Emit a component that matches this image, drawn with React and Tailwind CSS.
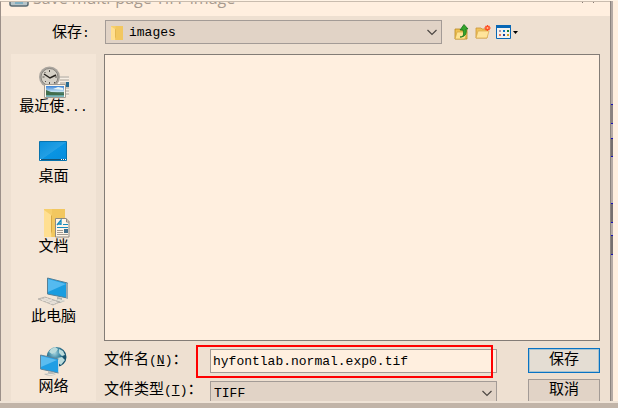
import React from "react";

const FONT = "font-['Liberation_Mono','Noto_Sans_CJK_SC',monospace]";

function Chevron() {
  return (
    <svg className="pointer-events-none absolute right-1 top-2 h-2 w-3" viewBox="0 0 12 8" fill="none" stroke="#4c4743" strokeWidth="1.2">
      <path d="M1.500 2 6 6.500l4.500-4.500" />
    </svg>
  );
}

function FolderShape() {
  return (
    <>
      <path d="M0 0h21v28H0z" fill="#f6cf6c" />
      <path d="M8 0h13v28H8z" fill="#f2c75f" />
      <path d="M0 1l7 5v22H0z" fill="#ffdf91" />
      <path d="M7 6l1 1v15l-1 3z" fill="#d9a944" />
    </>
  );
}

function SmallFolder() {
  return (
    <svg className="pointer-events-none absolute left-1.5 top-1.5 h-3.5 w-3" viewBox="0 0 21 28" preserveAspectRatio="none">
      <FolderShape />
    </svg>
  );
}

function RecentIcon() {
  return (
    <svg className="h-8 w-8" viewBox="0 0 32 32">
      <defs>
        <linearGradient id="photo" x2="0" y2="1">
          <stop offset="0" stopColor="#3b83d6" />
          <stop offset=".55" stopColor="#cfe9f3" />
          <stop offset=".6" stopColor="#3f6d55" />
          <stop offset="1" stopColor="#7fc0c9" />
        </linearGradient>
      </defs>
      <path d="M20 10h11v20H20z" fill="#f7efe4" />
      <path d="M20 11h11M22 14h9M22 17h9M28 22h3M28 25h3M28 28h3" stroke="#aaa299" />
      <path d="M28 16h3v5h-3z" fill="#286b91" />
      <circle cx="11.500" cy="11" r="10.500" fill="#aaa59e" />
      <circle cx="11.500" cy="11" r="8.500" fill="#d5d0c6" stroke="#89857f" />
      <path d="M11.500 4v2M11.500 16v2M4.500 11h2M17 11h2M6.500 6l1 1M16 16l1 1M7 16l1-1" stroke="#55514c" />
      <path d="M6 8l6 4 6-3" fill="none" stroke="#27231f" strokeWidth="1.500" />
      <path d="M6.500 18.500h21v13h-21z" fill="#fff8eb" stroke="#a39c93" />
      <path d="M8 20h18v11H8z" fill="url(#photo)" />
      <path d="M8 24l5 2 6 1 7 1v1H8z" fill="#426e4c" />
      <path d="M15 23l5-2 5 1v2z" fill="#e5f3f5" />
    </svg>
  );
}

function DesktopIcon() {
  return (
    <svg className="h-8 w-8" viewBox="0 0 32 32">
      <defs>
        <linearGradient id="desk" x2="1" y2="1">
          <stop offset="0" stopColor="#0a90dc" />
          <stop offset=".5" stopColor="#239fe4" />
          <stop offset=".52" stopColor="#0994e3" />
          <stop offset="1" stopColor="#078ddd" />
        </linearGradient>
      </defs>
      <path d="M1.500 5.500h27v19h-27z" fill="url(#desk)" stroke="#0873ad" />
      <path d="M2 23h26v1H2z" fill="#145276" />
      <path d="M2 23h1v1H2zM23 23h1v1h-1zM25 23h1v1h-1zM27 23h1v1h-1z" fill="#fff" />
    </svg>
  );
}

function DocumentsIcon() {
  return (
    <svg className="h-8 w-8" viewBox="0 0 32 32">
      <g transform="translate(6 3)"><FolderShape /></g>
      <path d="M17.500 12.500H28l3 3V31H17.500z" fill="#fff5e7" stroke="#8f8980" />
      <path d="M28.500 12.500V16H31" fill="none" stroke="#8f8980" />
      <path d="M19 19l4-5v5m-3-1h3" fill="none" stroke="#168cc0" strokeWidth="1.300" />
      <path d="M25 18.500h5M19 21.500h11" stroke="#168cc0" />
      <path d="M19 24.500h6M19 26.500h6M19 28.500h11" stroke="#a39b91" />
      <path d="M26 23h4v4h-4z" fill="#46718d" />
    </svg>
  );
}

function ComputerIcon() {
  return (
    <svg className="h-8 w-8" viewBox="0 0 32 32">
      <g transform="translate(-1 -1)">
        <path d="M10.500 3l20 5v15l-20-4z" fill="#1a9de0" stroke="#557f95" />
        <path d="M11 4l18 5-18 8z" fill="#54baf0" />
        <path d="M29 8l2 .5V24l-2-1z" fill="#9aa7ad" />
        <path d="M20 22l5 1v2l3 1-5 2-8-2 5-1z" fill="#aeb2b0" />
        <path d="M17 25l5-1 6 2-5 1z" fill="#dfe0d8" />
        <path d="M1 24l7-2 15 5-7 3z" fill="#cbc8c1" stroke="#aaa6a0" strokeWidth=".7" />
        <path d="M4 24l14 5M7 23l13 5M5 26l6-3M9 27l6-3M13 29l6-3" stroke="#f1e9df" strokeWidth=".8" />
      </g>
    </svg>
  );
}

function NetworkIcon() {
  return (
    <svg className="h-8 w-8" viewBox="0 0 32 32">
      <defs>
        <radialGradient id="globe" cx=".4" cy=".3">
          <stop offset="0" stopColor="#a8d5df" />
          <stop offset=".5" stopColor="#4b94ae" />
          <stop offset="1" stopColor="#17526d" />
        </radialGradient>
      </defs>
      <g transform="translate(-1 -1)">
        <circle cx="19.500" cy="12" r="10" fill="url(#globe)" />
        <path d="M14 4l4-2 3 2-2 3-4 2-3-2zM22 4l4 2 2 4-3 1-3-3zM20 13l5-1 3 3-4 5-3-2z" fill="#badbdc" />
        <path d="M3.500 10l18 4v14l-18-4z" fill="#209ee4" stroke="#60859b" />
        <path d="M4 11l16 4-16 7z" fill="#5bbcf0" />
        <path d="M21 14l1 .5V28l-1-.5z" fill="#c9d5d9" />
        <path d="M11 26l5 1v1l3 1c-3 2-9 2-12 0l4-1z" fill="#b9bcb9" />
        <path d="M8 28c3 1 7 1 10 1-3 2-8 1-10-1z" fill="#ece6dc" />
      </g>
    </svg>
  );
}

const places = [
  { name: "最近使", more: "...", Icon: RecentIcon },
  { name: "桌面", Icon: DesktopIcon },
  { name: "文档", Icon: DocumentsIcon },
  { name: "此电脑", Icon: ComputerIcon },
  { name: "网络", Icon: NetworkIcon },
];

function UpIcon() {
  return (
    <svg className="h-4 w-4" viewBox="0 0 16 16">
      <path d="M1 5h5l1 1h6v9H1z" fill="#efc152" stroke="#b88822" strokeWidth=".8" />
      <path d="M3 8h10l-2 7H1z" fill="#ffe391" stroke="#d3a43c" strokeWidth=".7" />
      <path d="M6 13c4 0 4-3 3-7H6l4-5.500L14 5h-2c1 5-1 8-6 8z" fill="#35a52c" stroke="#157316" strokeWidth=".8" />
    </svg>
  );
}

function NewFolderIcon() {
  return (
    <svg className="h-4 w-4" viewBox="0 0 16 16">
      <path d="M1 4h5l1 1h5v9H1z" fill="#f0c35a" stroke="#ca9635" strokeWidth=".8" />
      <path d="M3 7h11l-2 7H1z" fill="#ffe49b" stroke="#d9a94a" strokeWidth=".7" />
      <path d="M12.500 1v6M9.500 4h6M10.500 2l4 4M14.500 2l-4 4" stroke="#ff4b22" strokeWidth="1.300" />
      <circle cx="12.500" cy="4" r="1" fill="#ffc38a" />
    </svg>
  );
}

function ViewIcon() {
  return (
    <svg className="h-4 w-6" viewBox="0 0 24 16">
      <path d="M.5 1.500h14v13H.5z" fill="#f4f2ee" stroke="#0867b5" />
      <path d="M0 1h15v3H0z" fill="#0867b5" />
      <path d="M3 6h2v2H3z" fill="#a497af" /><path d="M7 6h2v2H7z" fill="#0875c9" /><path d="M11 6h2v2h-2z" fill="#16823a" />
      <path d="M3 10h2v2H3z" fill="#ef745a" /><path d="M7 10h2v2H7z" fill="#164199" /><path d="M11 10h2v2h-2z" fill="#d2a226" />
      <path d="M17 7h5l-2.500 3z" fill="#000" />
    </svg>
  );
}

const selectStyle = "w-full appearance-none rounded-none border border-[#a39b96] bg-[#e1d3c6] pt-0.5 outline-none";

export default function App() {
  return (
    <div className={`flex h-screen flex-col overflow-hidden bg-[#ffefdf] text-[13px] leading-5 text-black ${FONT}`}>
      <div className="flex min-h-0 flex-1 border-t border-[#fff3e5]">
        <main className="flex min-w-0 flex-1 flex-col border-l border-t border-l-[#9c9089] border-t-[#c9bcae] bg-[#eee0d1]">
          <header className="flex h-[14px] shrink-0 items-end justify-between overflow-hidden bg-[#ffefdf] pb-2 pl-2 pr-3 font-['Open_Sans'] text-[16px] text-[#a89a8e]">
            <div className="flex items-end gap-1">
              <svg className="h-5 w-5" viewBox="0 0 20 20" fill="#b6c4c8" stroke="#596a72" strokeWidth="1.500">
                <rect x="1" y="1" width="18" height="17" rx="2" />
                <path d="M6 15h8" stroke="#6ea8c0" />
              </svg>
              <h1>Save multi-page TIFF image</h1>
            </div>
            <button aria-label="关闭" className="h-5 w-5">
              <svg viewBox="0 0 20 20" stroke="#887c74" fill="none"><path d="M4 3l12 12M16 3L4 15" /></svg>
            </button>
          </header>

          <div className="flex min-h-0 flex-1 flex-col">
            <div className="flex h-[38px] shrink-0 items-start pt-1">
              <label htmlFor="folder" className="w-[103px] pl-[51px] pt-1 text-[15px] leading-5">
                保存<span className="text-[13px]">:</span>
              </label>
              <div className="relative ml-px w-[337px]">
                <select id="folder" className={`${selectStyle} h-6 pl-[23px]`}><option>images</option></select>
                <SmallFolder />
                <Chevron />
              </div>
              <div className="ml-3 flex gap-[5px] pt-1">
                <button aria-label="向上一级"><UpIcon /></button>
                <button aria-label="新建文件夹"><NewFolderIcon /></button>
                <button aria-label="查看菜单"><ViewIcon /></button>
              </div>
            </div>

            <div className="flex min-h-0 flex-1 gap-2 pl-[10px] pr-[10px]">
              <nav className="flex w-[85px] shrink-0 flex-col gap-[18px] bg-[#f4e6d7] pt-3">
                {places.map(({ name, more, Icon }) => (
                  <button key={name} className="flex h-[52px] shrink-0 flex-col items-center text-[15px] leading-5">
                    <Icon />
                    <span className="whitespace-nowrap">{name}{more && <span className="text-[13px]">{more}</span>}</span>
                  </button>
                ))}
              </nav>

              <section className="flex min-w-0 flex-1 flex-col">
                <div role="listbox" aria-label="images" className="flex-1 border border-[#837c76] bg-[#ffefdf]" />
                <div className="mt-[7px] flex items-start">
                  <label htmlFor="filename" className="w-[106px] shrink-0 whitespace-nowrap pt-px text-[15px] leading-6">
                    文件名<span className="text-[13px]">(<u>N</u>)</span>：
                  </label>
                  <div className="relative mr-[31px] mt-px min-w-0 flex-1">
                    <input id="filename" defaultValue="hyfontlab.normal.exp0.tif" className="block h-6 w-full border border-[#a39b96] bg-[#ffefdf] px-0.5 outline-none" />
                    <div className="pointer-events-none absolute -bottom-[5px] -left-3.5 -top-1 right-1 border-2 border-[#f00]" />
                  </div>
                  <button className="h-[25px] w-[72px] border border-[#0873c4] bg-[#e4ddd3] text-[15px] leading-5 outline-1 -outline-offset-2 outline-[#a8c3cf]">保存</button>
                </div>
                <div className="mt-[6px] flex h-[22px] shrink-0 items-start overflow-hidden">
                  <label htmlFor="type" className="w-[106px] shrink-0 whitespace-nowrap pt-0.5 text-[15px] leading-5">
                    文件类型<span className="text-[13px]">(<u>T</u>)</span>：
                  </label>
                  <div className="relative mr-[31px] mt-0.5 min-w-0 flex-1">
                    <select id="type" className={`${selectStyle} block h-6 px-[3px]`}><option>TIFF</option></select>
                    <Chevron />
                  </div>
                  <button className="h-6 w-[72px] border border-[#a39b96] bg-[#e1d3c6] text-[15px] leading-5">取消</button>
                </div>
              </section>
            </div>
          </div>
        </main>
        <aside className="flex w-[8px] shrink-0 flex-col">
          <div className="flex w-[3px] flex-1 flex-col border-l border-[#8e8580] bg-[#b5aaa4] pt-[103px]">
            <span className="h-5 border-y border-[#1810b8] bg-[#8b8280]" />
            <span className="mt-3.5 h-[19px] border-y border-[#1810b8] bg-[#77706f]" />
            <span className="mt-[46px] h-5 border-y border-[#1810b8] bg-[#77706f]" />
            <span className="mt-3 h-5 border-y border-[#1810b8] bg-[#77706f]" />
          </div>
        </aside>
      </div>
      <footer className="h-[7px] shrink-0 border-t-2 border-[#efe3d6] bg-[#c1b4a8]" />
    </div>
  );
}
